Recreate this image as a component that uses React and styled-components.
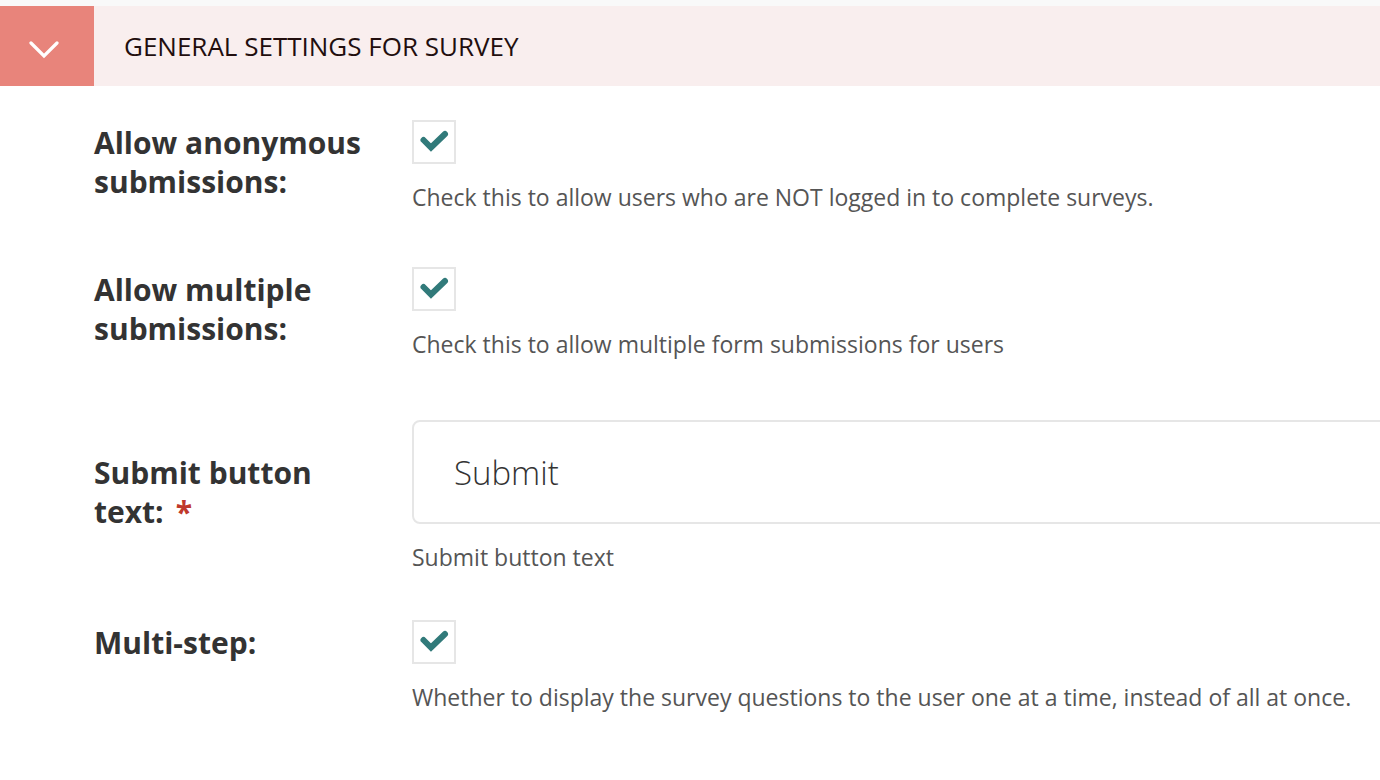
import React from "react"
import styled, {createGlobalStyle} from "styled-components"

const GlobalStyle = createGlobalStyle`
  html, body {
    margin: 0;
    padding: 0;
    background: #ffffff;
    font-family: "Open Sans", "DejaVu Sans", sans-serif;
  }
`

const Page = styled.div`
  width: 1380px;
  min-height: 780px;
  overflow: hidden;
  padding-top: 6px;
  background: linear-gradient(#f9f9f9, #f9f9f9) top / 100% 6px no-repeat, #ffffff;
  box-sizing: border-box;
`

const Header = styled.div`
  display: flex;
  align-items: stretch;
  height: 80px;
  background-color: #f9eeee;
`

const Toggle = styled.div`
  width: 94px;
  background-color: #e8847b;
  display: flex;
  align-items: center;
  justify-content: center;
  svg {
    margin-left: -6px;
    margin-top: 7px;
  }
`

const Title = styled.h2`
  margin: 0;
  padding-left: 30px;
  display: flex;
  align-items: center;
  font-size: 26px;
  font-weight: 400;
  color: #220e0e;
  text-transform: uppercase;
`

const Form = styled.div`
  padding-left: 94px;
`

const Row = styled.div`
  display: flex;
  margin-top: ${p => p.$top}px;
`

const Label = styled.label`
  width: 318px;
  flex-shrink: 0;
  padding-top: ${p => p.$offset}px;
  font-size: 30px;
  line-height: 39px;
  font-weight: 700;
  color: #333333;
`

const Required = styled.span`
  color: #c0392b;
  margin-left: 12px;
`

const Field = styled.div`
  flex: 1;
  min-width: 0;
`

const Box = styled.div`
  width: 40px;
  height: 40px;
  border: 2px solid #e6e6e6;
  svg {
    display: block;
  }
`

const TextInput = styled.div`
  height: 100px;
  margin-right: -20px;
  border: 2px solid #e6e6e6;
  border-radius: 8px;
  display: flex;
  align-items: center;
  padding-left: 40px;
  font-size: 33px;
  font-weight: 300;
  color: #333333;
`

const Help = styled.div`
  margin-top: 17px;
  font-size: 23px;
  line-height: 32px;
  color: #555555;
`

const Chevron = () => (
  <svg width="30" height="18" viewBox="0 0 30 18">
    <path d="M2 2 L15 15 L28 2" fill="none" stroke="#ffffff" strokeWidth="3.2" strokeLinecap="round" strokeLinejoin="miter" />
  </svg>
)

const Check = () => (
  <svg width="40" height="40" viewBox="0 0 40 40">
    <path d="M9.5 18 L17 25.5 L31 12" fill="none" stroke="#317a7a" strokeWidth="6" strokeLinecap="round" strokeLinejoin="miter" />
  </svg>
)

const CheckRow = ({top, label, help}) => (
  <Row $top={top}>
    <Label $offset={3}>{label}</Label>
    <Field>
      <Box><Check /></Box>
      <Help>{help}</Help>
    </Field>
  </Row>
)

export default () => (
  <Page>
    <GlobalStyle />
    <Header>
      <Toggle><Chevron /></Toggle>
      <Title>General settings for survey</Title>
    </Header>
    <Form>
      <CheckRow top={34} label={<>Allow anonymous<br />submissions:</>} help="Check this to allow users who are NOT logged in to complete surveys." />
      <CheckRow top={54} label={<>Allow multiple<br />submissions:</>} help="Check this to allow multiple form submissions for users" />
      <Row $top={60}>
        <Label $offset={33}>Submit button<br />text:<Required>*</Required></Label>
        <Field>
          <TextInput>Submit</TextInput>
          <Help>Submit button text</Help>
        </Field>
      </Row>
      <CheckRow top={47} label="Multi-step:" help="Whether to display the survey questions to the user one at a time, instead of all at once." />
    </Form>
  </Page>
)
